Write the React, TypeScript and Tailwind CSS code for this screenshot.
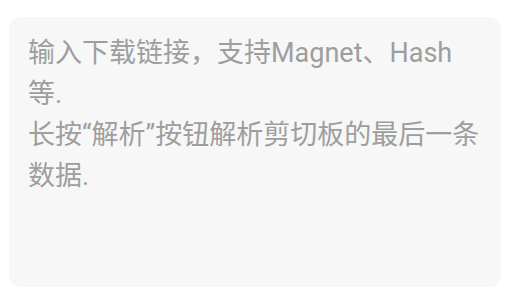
export default function App() {
  return (
    <div className="w-[512px] h-[303px] bg-white pt-[17px] pl-[9px]">
      <div
        className="w-[492px] h-[270px] rounded-[12px] bg-[#f7f7f7] pl-[19px] pr-[20px] pt-[16px] text-[27px] leading-[41px] text-[#9e9e9e]"
        style={{ fontFamily: 'Roboto, "Noto Sans CJK SC", sans-serif' }}
      >
        <p>输入下载链接，支持Magnet、Hash等.</p>
        <p>长按“解析”按钮解析剪切板的最后一条数据.</p>
      </div>
    </div>
  );
}
